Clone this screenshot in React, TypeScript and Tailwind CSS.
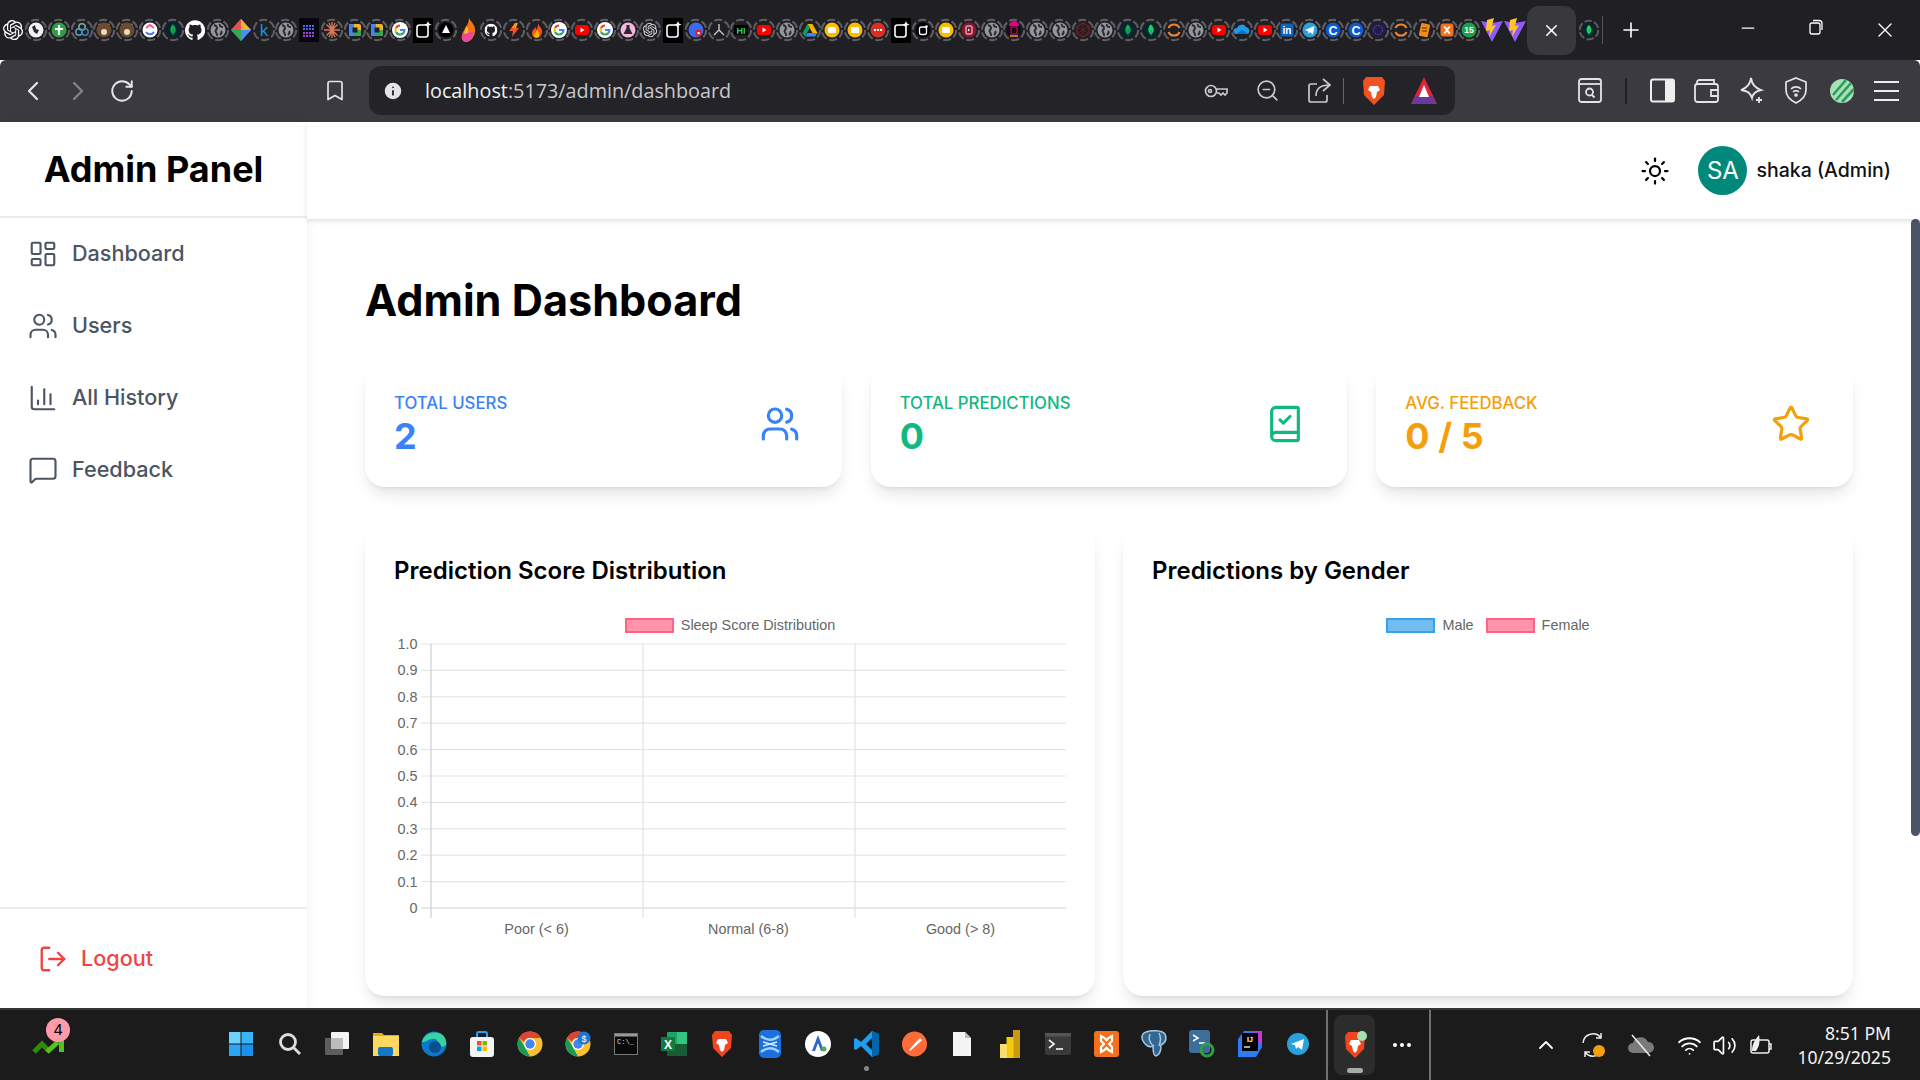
import React from 'react'
import {
  BarChart3,
  BookCheck,
  ChevronLeft,
  ChevronRight,
  ChevronUp,
  LayoutDashboard,
  LogOut,
  MessageSquare,
  Minus,
  Plus,
  RotateCw,
  Star,
  Sun,
  Users,
  Volume2,
  Wifi,
  X,
  ZoomOut,
  Bookmark,
  Info,
} from 'lucide-react'
import { SiGithub, SiMongodb, SiOpenai } from 'react-icons/si'

const UI = '"Inter", "Liberation Sans", sans-serif'

function G() {
  return (
    <>
      <circle cx="12" cy="12" r="8" fill="#fff" />
      <path d="M12 7.5a4.5 4.5 0 0 0-4 2.5" stroke="#ea4335" strokeWidth="2.2" fill="none" />
      <path d="M8 10a4.5 4.5 0 0 0 0 4" stroke="#fbbc05" strokeWidth="2.2" fill="none" />
      <path d="M8 14a4.5 4.5 0 0 0 7.4 1" stroke="#34a853" strokeWidth="2.2" fill="none" />
      <path d="M15.4 15a4.5 4.5 0 0 0 1-3H12" stroke="#4285f4" strokeWidth="2.2" fill="none" />
    </>
  )
}

function Ring() {
  return <circle cx="12" cy="12" r="10.2" fill="none" stroke="#5e5e63" strokeWidth="2" strokeDasharray="8 2.7" />
}

function Disc({ c }: { c: string }) {
  return <circle cx="12" cy="12" r="7.5" fill={c} />
}

const GLYPHS: Record<string, React.ReactNode> = {
  globe: (
    <>
      <Ring />
      <Disc c="#93969c" />
      <path d="M8 7c3 1 4 3 2 5s2 3 1 6M14 6c-1 2 1 3 3 3M15 13c1 1 0 3-1 4" stroke="#2b2b30" strokeWidth="2" fill="none" />
    </>
  ),
  dog: (
    <>
      <Ring />
      <Disc c="#f2f2f2" />
      <path d="M8 9l3-2 1 4 3 1-2 4-3-2z" fill="#2a2a2a" />
    </>
  ),
  cross: (
    <>
      <Ring />
      <Disc c="#2ea043" />
      <path d="M12 7v10M8 11h8" stroke="#fff" strokeWidth="2.2" />
    </>
  ),
  rings: (
    <>
      <Ring />
      <circle cx="12" cy="9" r="3.2" fill="none" stroke="#7fa9a8" strokeWidth="1.5" />
      <circle cx="9" cy="14" r="3.2" fill="none" stroke="#5aa0b8" strokeWidth="1.5" />
      <circle cx="15" cy="14" r="3.2" fill="none" stroke="#3f7fbb" strokeWidth="1.5" />
    </>
  ),
  deer: (
    <>
      <Ring />
      <path d="M7 6l3 4M17 6l-3 4" stroke="#e8dcc8" strokeWidth="1.4" />
      <Disc c="#6b4a2e" />
      <circle cx="12" cy="14" r="3" fill="#e8dcc8" />
    </>
  ),
  clickup: (
    <>
      <Ring />
      <Disc c="#fff" />
      <path d="M8 10l4-3 4 3" stroke="#ff5a8a" strokeWidth="2" fill="none" />
      <path d="M8 14c2 3 6 3 8 0" stroke="#4f7bff" strokeWidth="2" fill="none" />
    </>
  ),
  mongo: (
    <>
      <Ring />
      <Disc c="#04262e" />
      <g transform="translate(6 6) scale(.5)">
        <SiMongodb size={24} color="#13aa52" />
      </g>
    </>
  ),
  mongo2: (
    <>
      <Ring />
      <Disc c="#04262e" />
      <g transform="translate(6 6) scale(.5)">
        <SiMongodb size={24} color="#1fd066" />
      </g>
    </>
  ),
  gemini: (
    <>
      <path d="M12 1l10 11-10 11L2 12z" fill="#4c8df6" />
      <path d="M12 1l10 11H12z" fill="#f2b32e" />
      <path d="M12 12h10L12 23z" fill="#4c8df6" />
      <path d="M2 12L12 1v11z" fill="#e5534b" />
      <path d="M2 12h10v11z" fill="#34a853" />
    </>
  ),
  k: (
    <>
      <Ring />
      <text x="12" y="18" textAnchor="middle" fontSize="17" fill="#1597d5" fontFamily="Liberation Sans">k</text>
    </>
  ),
  codesq: (
    <>
      <rect x="2" y="0" width="20" height="24" fill="#08060f" />
      <path d="M6 8h12M6 11h12" stroke="#4d6ae0" strokeWidth="2" strokeDasharray="2 1" />
      <path d="M6 15h12M6 18h12" stroke="#a040e0" strokeWidth="2" strokeDasharray="2 1" />
    </>
  ),
  claude: (
    <>
      <Ring />
      <path d="M12 4v16M4 12h16M6.5 6.5l11 11M17.5 6.5l-11 11M9 4.8l6 14.4M15 4.8l-6 14.4" stroke="#d9775a" strokeWidth="1.3" />
    </>
  ),
  meet: (
    <>
      <Ring />
      <rect x="6" y="6" width="12" height="12" rx="2" fill="#f2b32e" />
      <rect x="6" y="12" width="12" height="6" rx="1" fill="#34a853" />
      <rect x="6" y="6" width="5" height="12" fill="#4285f4" />
      <rect x="9.5" y="9.5" width="5" height="5" fill="#202124" />
    </>
  ),
  g: (
    <>
      <Ring />
      <G />
    </>
  ),
  boxstar: (
    <>
      <rect x="2" y="0" width="20" height="25" fill="#000" />
      <rect x="6" y="7" width="11" height="12" rx="2.5" fill="none" stroke="#fff" strokeWidth="1.6" />
      <path d="M17 3l1 2.5 2.5 1-2.5 1-1 2.5-1-2.5-2.5-1 2.5-1z" fill="#fff" />
    </>
  ),
  boxround: (
    <>
      <Ring />
      <Disc c="#000" />
      <rect x="8.5" y="9" width="7" height="7.5" rx="2" fill="none" stroke="#fff" strokeWidth="1.3" />
      <circle cx="15.5" cy="8.5" r="1.3" fill="#fff" />
    </>
  ),
  tri: (
    <>
      <Ring />
      <Disc c="#000" />
      <path d="M12 7l4 8H8z" fill="#fff" />
    </>
  ),
  fire: (
    <>
      <path d="M13 0c2 4 7 7 6 14-1 6-5 10-9 10-3 0-5-3-4-7 1-5 7-10 7-17z" fill="#f97316" />
      <path d="M6 17c3-3 9-3 12-3-1 6-5 10-8 10-3 0-5-3-4-7z" fill="#ec4899" />
      <path d="M10 8c2 2 3 4 2 7l-4 1z" fill="#fbbf24" />
    </>
  ),
  github: (
    <g transform="translate(2 2) scale(.84)">
      <SiGithub size={24} color="#fff" />
    </g>
  ),
  githubr: (
    <>
      <Ring />
      <g transform="translate(5.5 5.5) scale(.54)">
        <SiGithub size={24} color="#fff" />
      </g>
    </>
  ),
  bolt: (
    <>
      <Ring />
      <path d="M13 5l-6 8h4l-1 6 7-9h-4l2-5z" fill="#f2542d" />
      <path d="M13 5l-3 5h4l2-5z" fill="#f59e0b" />
    </>
  ),
  flame: (
    <>
      <Ring />
      <path d="M13 4c0 4 5 6 4 11-1 3-3 5-5 5-3 0-5-2-5-5 0-3 3-4 3-6 1 1 1 2 1 3 2-2 2-5 2-8z" fill="#f4511e" />
      <path d="M12 12c1 2 3 3 2 6-1 2-4 2-5 0-1-2 2-3 3-6z" fill="#ffb300" />
    </>
  ),
  yt: (
    <>
      <Ring />
      <rect x="5" y="7" width="14" height="10" rx="3" fill="#f00" />
      <path d="M10.5 9.5l4 2.5-4 2.5z" fill="#fff" />
    </>
  ),
  flask: (
    <>
      <Ring />
      <Disc c="#f5b5e0" />
      <path d="M10.5 7h3v3l3 6h-9l3-6z" fill="#2a2a2a" />
    </>
  ),
  openai: (
    <g transform="translate(2 2) scale(.84)">
      <SiOpenai size={24} color="#fff" />
    </g>
  ),
  openair: (
    <>
      <Ring />
      <g transform="translate(4.8 4.8) scale(.6)">
        <SiOpenai size={24} color="#ddd" />
      </g>
    </>
  ),
  copilot: (
    <>
      <Ring />
      <Disc c="#3b6df0" />
      <circle cx="14.5" cy="15" r="3.5" fill="#e11d2a" />
      <rect x="13.5" y="14" width="2.2" height="2.2" fill="#fff" />
    </>
  ),
  nodes: (
    <>
      <Ring />
      <path d="M12 6v6l-5 5M12 12l5 5" stroke="#c9c9c9" strokeWidth="1.4" fill="none" />
    </>
  ),
  hn: (
    <>
      <Ring />
      <rect x="5" y="7" width="14" height="10" rx="2" fill="#000" />
      <text x="12" y="15.5" textAnchor="middle" fontSize="9" fontWeight="700" fill="#2bd46f" fontFamily="Liberation Sans">HI</text>
    </>
  ),
  drive: (
    <>
      <Ring />
      <path d="M9.5 6h5l5 9h-5z" fill="#f4b400" />
      <path d="M9.5 6L4.5 15l2.5 3.5 5-9z" fill="#0f9d58" />
      <path d="M7 18.5h10l2.5-3.5h-10z" fill="#4285f4" />
    </>
  ),
  keep: (
    <>
      <Ring />
      <Disc c="#fbbc04" />
      <rect x="8" y="9" width="8" height="6" rx="1" fill="#fff" />
    </>
  ),
  dots: (
    <>
      <Ring />
      <Disc c="#d93025" />
      <path d="M8 12h8" stroke="#fff" strokeWidth="2" strokeDasharray="2 1" />
    </>
  ),
  darkred: (
    <>
      <Ring />
      <Disc c="#8f1430" />
      <rect x="9" y="8" width="6" height="8" rx="1" fill="none" stroke="#eee" strokeWidth="1" />
      <path d="M11 10.5l2 1.5-2 1.5z" fill="#eee" />
    </>
  ),
  magenta: (
    <>
      <Ring />
      <Disc c="#111" />
      <path d="M7 8a5 5 0 0 1 10 0z" fill="#e6007e" />
      <rect x="9" y="9" width="6" height="7" fill="none" stroke="#e6007e" strokeWidth="1" />
      <path d="M8 18h8" stroke="#f59e0b" strokeWidth="1.5" />
    </>
  ),
  hex: (
    <>
      <Ring />
      <path d="M12 5l6 3.5v7L12 19l-6-3.5v-7z" fill="none" stroke="#7a1f1f" strokeWidth="1.3" />
      <path d="M12 5v14M6 8.5l12 7M18 8.5l-12 7" stroke="#7a1f1f" strokeWidth=".8" />
    </>
  ),
  arcs: (
    <>
      <Ring />
      <path d="M6.5 10a6 6 0 0 1 11 0" stroke="#f0852d" strokeWidth="2" fill="none" />
      <path d="M6.5 14a6 6 0 0 0 11 0" stroke="#f0852d" strokeWidth="2" fill="none" />
    </>
  ),
  cloud: (
    <>
      <Ring />
      <path d="M6 16a3 3 0 0 1 1-6 5 5 0 0 1 9-1 4 4 0 0 1 2 7z" fill="#1e9ae8" />
      <path d="M6 16l6-4 6 4z" fill="#0a6fc2" />
    </>
  ),
  linkedin: (
    <>
      <Ring />
      <rect x="5.5" y="5.5" width="13" height="13" rx="1.5" fill="#0a66c2" />
      <text x="12" y="16.3" textAnchor="middle" fontSize="10" fontWeight="700" fill="#fff" fontFamily="Liberation Sans">in</text>
    </>
  ),
  telegram: (
    <>
      <Ring />
      <Disc c="#2aa1dd" />
      <path d="M7 12l9.5-4-1.5 8.5-3-2.2-1.5 1.5-.5-2.5z" fill="#fff" />
    </>
  ),
  c: (
    <>
      <Ring />
      <Disc c="#0a5ad6" />
      <text x="12" y="16.5" textAnchor="middle" fontSize="12.5" fontWeight="700" fill="#fff" fontFamily="Liberation Sans">C</text>
    </>
  ),
  spiral: (
    <>
      <Ring />
      <Disc c="#211d4a" />
      <circle cx="12" cy="12" r="4.5" fill="none" stroke="#5a53a8" strokeWidth="1" strokeDasharray="2 1" />
    </>
  ),
  note: (
    <>
      <Ring />
      <rect x="8" y="5.5" width="9" height="13" rx="1" fill="#f08a18" transform="rotate(12 12 12)" />
      <path d="M10 10h5M10 13h5" stroke="#5a3208" strokeWidth="1" />
    </>
  ),
  xampp: (
    <>
      <Ring />
      <rect x="5.5" y="5.5" width="13" height="13" rx="2.5" fill="#f5701c" />
      <path d="M9 8.5c3 2 3 5 6 7M15 8.5c-3 2-3 5-6 7" stroke="#fff" strokeWidth="1.8" fill="none" />
    </>
  ),
  fifteen: (
    <>
      <Ring />
      <Disc c="#19a24a" />
      <text x="12" y="15.2" textAnchor="middle" fontSize="8.5" fontWeight="700" fill="#fff" fontFamily="Liberation Sans">15</text>
    </>
  ),
  vite: (
    <>
      <path d="M1 3l11 2 11-2-11 21z" fill="#8f5cf7" />
      <path d="M14 0L7 2l-1 11 4-1-1 7 7-12-4 1z" fill="#ffc728" />
    </>
  ),
}

const TABS = [
  'openai', 'dog', 'cross', 'rings', 'deer', 'deer', 'clickup', 'mongo', 'github', 'globe', 'gemini', 'k', 'globe', 'codesq',
  'claude', 'meet', 'meet', 'g', 'boxstar', 'tri', 'fire', 'githubr', 'bolt', 'flame', 'g', 'yt', 'g', 'flask', 'openair',
  'boxstar', 'copilot', 'nodes', 'hn', 'yt', 'globe', 'drive', 'keep', 'keep', 'dots', 'boxstar', 'boxround', 'keep', 'darkred',
  'globe', 'magenta', 'globe', 'globe', 'hex', 'globe', 'mongo', 'mongo2', 'arcs', 'globe', 'yt', 'cloud', 'yt', 'linkedin',
  'telegram', 'c', 'c', 'spiral', 'arcs', 'note', 'xampp', 'fifteen', 'vite', 'vite',
]

function Favicon({ kind }: { kind: string }) {
  return (
    <div className="flex h-6 w-[22.75px] shrink-0 items-center justify-center">
      <svg width="24" height="24" viewBox="0 0 24 24" className="shrink-0 overflow-visible">
        {GLYPHS[kind]}
      </svg>
    </div>
  )
}

function TabStrip() {
  return (
    <div className="flex h-[60px] items-center bg-[#1f1f24] pl-[2px] text-white">
      {TABS.map((t, i) => (
        <Favicon key={i} kind={t} />
      ))}
      <div className="ml-[1px] flex h-[49px] w-[49px] items-center justify-center rounded-xl bg-[#38383d]">
        <X size={19} strokeWidth={2} />
      </div>
      <div className="flex w-[26px] justify-center">
        <svg width="22" height="24" viewBox="0 0 24 24">
          {GLYPHS.mongo2}
        </svg>
      </div>
      <div className="h-[28px] w-px bg-[#55555a]" />
      <div className="flex w-[55px] justify-center">
        <Plus size={24} strokeWidth={1.6} />
      </div>
      <div className="ml-auto flex">
        <div className="flex w-[68px] justify-center">
          <Minus size={20} strokeWidth={1.5} />
        </div>
        <div className="flex w-[68px] justify-center">
          <svg width="18" height="18" viewBox="0 0 18 18" fill="none" stroke="#fff" strokeWidth="1.3">
            <rect x="3" y="5" width="10" height="11" rx="2" />
            <path d="M6 2.5h6a3 3 0 0 1 3 3V12" />
          </svg>
        </div>
        <div className="flex w-[70px] justify-center">
          <X size={24} strokeWidth={1.4} />
        </div>
      </div>
    </div>
  )
}

function Toolbar() {
  return (
    <div className="flex h-[62px] items-center rounded-t-md bg-[#3a3a40] pb-[1px] text-[#e4e4e8]">
      <div className="ml-[17px] flex w-[128px] items-center">
        <div className="flex w-[32px] justify-center">
          <ChevronLeft size={34} strokeWidth={1.7} />
        </div>
        <div className="ml-[13px] flex w-[32px] justify-center text-[#85858a]">
          <ChevronRight size={34} strokeWidth={1.7} />
        </div>
        <div className="ml-[12px] flex w-[32px] justify-center">
          <RotateCw size={26} strokeWidth={1.8} />
        </div>
      </div>
      <div className="ml-[178px] flex w-[24px] justify-center">
        <Bookmark size={27} strokeWidth={1.7} />
      </div>
      <div className="ml-[22px] flex h-[49px] w-[1086px] items-center rounded-xl bg-[#232328] pl-[13px]">
        <Info size={22} fill="#e4e4e8" stroke="#232328" strokeWidth={2} />
        <div className="ml-[21px] text-[19.8px] leading-none text-[#c6c8ce]" style={{ fontFamily: '"Open Sans", sans-serif' }}>
          <span className="text-[#eef0f2]">localhost</span>:5173/admin/dashboard
        </div>
        <div className="ml-auto flex items-center text-[#c9c9cd]">
          <svg width="24" height="16" viewBox="0 0 24 16" fill="none" stroke="#c9c9cd" strokeWidth="1.7">
            <circle cx="7" cy="8" r="5.5" />
            <circle cx="6" cy="8" r="1.5" />
            <path d="M12.5 6H23v4l-2 2-2-2-2 2-2-2h-2.5" />
          </svg>
          <div className="ml-[27px]">
            <ZoomOut size={25} strokeWidth={1.6} />
          </div>
          <svg className="ml-[27px]" width="25" height="25" viewBox="0 0 25 25" fill="none" stroke="#c9c9cd" strokeWidth="1.7">
            <path d="M10 6H4a2 2 0 0 0-2 2v14a2 2 0 0 0 2 2h14a2 2 0 0 0 2-2v-5" />
            <path d="M9 18c0-7 4-11 13-11M16 1l7 6-7 6" />
          </svg>
          <div className="ml-[11px] h-[26px] w-px bg-[#66666b]" />
          <svg className="ml-[17px]" width="26" height="30" viewBox="0 0 26 30">
            <path d="M5 1h16l3 4-1 14-10 10L3 19 2 5z" fill="#f0531f" />
            <path d="M9 10h8l2 4-3 2-1 5-2 2-2-2-1-5-3-2z" fill="#fff" />
          </svg>
          <svg className="ml-[23px] mr-[17px]" width="28" height="30" viewBox="0 0 28 30">
            <path d="M14 1l13 27H1z" fill="#e0243a" />
            <path d="M1 28l5-8h16l5 8z" fill="#6d3a9c" />
            <path d="M14 9l5 12H9z" fill="#fff" />
          </svg>
        </div>
      </div>
      <div className="ml-[123px] flex items-center">
        <svg width="24" height="25" viewBox="0 0 24 25" fill="none" stroke="#e4e4e8" strokeWidth="1.8">
          <rect x="1" y="1" width="22" height="23" rx="2.5" />
          <path d="M1 6h22" />
          <circle cx="11.5" cy="14" r="3.5" />
          <path d="M14 17l2.5 2.5" />
        </svg>
        <div className="ml-[23px] h-[26px] w-[2px] bg-[#202024]" />
        <svg className="ml-[23px]" width="25" height="25" viewBox="0 0 25 25">
          <rect x="1" y="1.5" width="23" height="22" rx="2" fill="none" stroke="#eee" strokeWidth="2" />
          <rect x="15" y="1.5" width="9" height="22" fill="#eee" />
        </svg>
        <svg className="ml-[19px]" width="26" height="24" viewBox="0 0 26 24" fill="none" stroke="#e4e4e8" strokeWidth="1.8">
          <rect x="1" y="5" width="23" height="18" rx="2.5" />
          <path d="M3 5V3.5A2.5 2.5 0 0 1 5.5 1H20v4M24 11h-7v6h7" />
        </svg>
        <svg className="ml-[18px]" width="26" height="28" viewBox="0 0 26 28" fill="none" stroke="#e4e4e8" strokeWidth="1.8">
          <path d="M13 1c1 7 4 10 10 12-5 1-8 3-9 8-2-6-5-7-11-8 6-2 9-5 10-12z" />
          <path d="M21 20v6M18 23h6" />
        </svg>
        <svg className="ml-[21px]" width="22" height="27" viewBox="0 0 22 27" fill="none" stroke="#e4e4e8" strokeWidth="1.7">
          <path d="M11 1l10 4v8c0 6-4 10-10 13C5 23 1 19 1 13V5z" />
          <path d="M6 12a7 7 0 0 1 10 0M8 15a4 4 0 0 1 6 0" />
          <circle cx="11" cy="18" r="1" fill="#e4e4e8" />
        </svg>
        <svg className="ml-[23px]" width="24" height="24" viewBox="0 0 24 24">
          <circle cx="12" cy="12" r="12" fill="#a5e2b0" />
          <path d="M3 16L16 1M6 21L21 4M12 23L24 10" stroke="#2b9a66" strokeWidth="2.6" />
        </svg>
        <div className="ml-[20px] flex w-[25px] flex-col gap-[7px]">
          <div className="h-[2px] bg-[#eee]" />
          <div className="h-[2px] bg-[#eee]" />
          <div className="h-[2px] bg-[#eee]" />
        </div>
      </div>
    </div>
  )
}

const NAV = [
  { label: 'Dashboard', Icon: LayoutDashboard },
  { label: 'Users', Icon: Users },
  { label: 'All History', Icon: BarChart3 },
  { label: 'Feedback', Icon: MessageSquare },
]

function Sidebar() {
  return (
    <aside className="flex w-[307px] shrink-0 flex-col bg-white shadow-[2px_0_8px_rgba(0,0,0,0.05)]">
      <div className="flex h-[96px] items-center justify-center border-b-2 border-[#ececee] text-[36px] font-bold text-black">
        Admin Panel
      </div>
      <nav className="flex flex-col">
        {NAV.map(({ label, Icon }) => (
          <div key={label} className="flex h-[72px] items-center pl-[28px] text-[21.6px] font-medium text-[#4b5563]">
            <Icon size={30} strokeWidth={1.7} />
            <span className="-mt-[1px] ml-[14px]">{label}</span>
          </div>
        ))}
      </nav>
      <div className="mt-auto flex h-[101px] items-center border-t-2 border-[#ececee] pl-[38px] text-[21.6px] font-medium text-[#ef4444]">
        <LogOut size={30} strokeWidth={1.9} />
        <span className="ml-[13px]">Logout</span>
      </div>
    </aside>
  )
}

const STATS = [
  { label: 'TOTAL USERS', value: '2', color: 'text-[#3b82f6]', Icon: Users },
  { label: 'TOTAL PREDICTIONS', value: '0', color: 'text-[#10b981]', Icon: BookCheck },
  { label: 'AVG. FEEDBACK', value: '0 / 5', color: 'text-[#f59e0b]', Icon: Star },
]

function StatCard({ label, value, color, Icon }: (typeof STATS)[number]) {
  return (
    <div className={`flex h-[123px] items-center justify-between rounded-[20px] bg-white pl-[29px] pr-[42px] shadow-lg ${color}`}>
      <div className="-mt-[5px]">
        <div className="text-[16.8px] font-medium leading-[26px]">{label}</div>
        <div className="text-[36px] font-bold leading-[40px]">{value}</div>
      </div>
      <Icon size={40} strokeWidth={1.9} className="-mt-[3px]" />
    </div>
  )
}

function LegendChip({ label, fill, stroke }: { label: string; fill: string; stroke: string }) {
  return (
    <div className="flex items-center">
      <div className="h-[15px] w-[49px] border-2" style={{ backgroundColor: fill, borderColor: stroke }} />
      <span className="ml-[7px]">{label}</span>
    </div>
  )
}

const PINK = { fill: '#ff94ac', stroke: '#ff6384' }
const BLUE = { fill: '#72bcf0', stroke: '#36a2eb' }

function Legend({ children }: { children: React.ReactNode }) {
  return (
    <div
      className="flex h-[30px] items-center justify-center gap-[12px] text-[14.4px] text-[#666]"
      style={{ fontFamily: '"Liberation Sans", sans-serif' }}
    >
      {children}
    </div>
  )
}

const TICKS = ['1.0', '0.9', '0.8', '0.7', '0.6', '0.5', '0.4', '0.3', '0.2', '0.1', '0']
const CATS = [
  { label: 'Poor (< 6)', x: 142.5 },
  { label: 'Normal (6-8)', x: 354.5 },
  { label: 'Good (> 8)', x: 566.5 },
]

// plot area is 37..672 wide, 3..267 tall
function BarChart() {
  const step = 26.4
  const cols = [37, 249, 461]
  return (
    <svg width="672" height="310" viewBox="0 0 672 310" className="block overflow-visible" fontFamily="Liberation Sans" fontSize="14.4" fill="#666">
      {TICKS.map((t, i) => {
        const y = 3 + i * step
        return (
          <g key={t}>
            <line x1="27" x2="672" y1={y} y2={y} stroke={t === '0' ? '#cfcfcf' : '#e6e6e6'} strokeWidth="1.2" />
            <text x="23.5" y={y + 5} textAnchor="end">
              {t}
            </text>
          </g>
        )
      })}
      {cols.map((x) => (
        <line key={x} x1={x} x2={x} y1="3" y2="277" stroke={x === 37 ? '#cfcfcf' : '#e2e2e2'} strokeWidth="1.2" />
      ))}
      {CATS.map((c) => (
        <text key={c.label} x={c.x} y="292.5" textAnchor="middle">
          {c.label}
        </text>
      ))}
    </svg>
  )
}

function ChartCard({ title, children }: { title: string; children: React.ReactNode }) {
  return (
    <div className="h-[471px] rounded-[20px] bg-white px-[29px] pt-[28px] shadow-lg">
      <h3 className="text-[24px] font-semibold leading-[36px] text-black">{title}</h3>
      <div className="mt-[22px]">{children}</div>
    </div>
  )
}

function Main() {
  return (
    <main className="min-w-0 flex-1 overflow-hidden pl-[58px] pr-[58px] pt-[53px]">
      <h1 className="text-[43.2px] font-bold leading-[56px] text-black">Admin Dashboard</h1>
      <div className="mt-[36px] grid grid-cols-3 gap-[29px]">
        {STATS.map((s) => (
          <StatCard key={s.label} {...s} />
        ))}
      </div>
      <div className="mt-[38px] grid grid-cols-2 gap-[28px]">
        <ChartCard title="Prediction Score Distribution">
          <Legend>
            <LegendChip label="Sleep Score Distribution" {...PINK} />
          </Legend>
          <BarChart />
        </ChartCard>
        <ChartCard title="Predictions by Gender">
          <Legend>
            <LegendChip label="Male" {...BLUE} />
            <LegendChip label="Female" {...PINK} />
          </Legend>
        </ChartCard>
      </div>
    </main>
  )
}

function Header() {
  return (
    <header className="relative z-10 flex h-[97px] shrink-0 items-center justify-end bg-white pr-[29px] shadow-[0_2px_5px_rgba(0,0,0,0.12)]">
      <Sun size={30} strokeWidth={1.8} className="text-black" />
      <div className="ml-[28px] flex h-[49px] w-[49px] items-center justify-center rounded-full bg-[#00897b] text-[24px] text-white">SA</div>
      <span className="ml-[9px] text-[19.5px] font-medium text-[#111]">shaka (Admin)</span>
    </header>
  )
}

const TASK_ICONS: React.ReactNode[] = [
  <svg key="win" width="26" height="26" viewBox="0 0 26 26">
    <rect x="0" y="1" width="11.5" height="11.5" fill="#6fd0fa" />
    <rect x="12.5" y="1" width="11.5" height="11.5" fill="#39b5f7" />
    <rect x="0" y="13.5" width="11.5" height="11.5" fill="#2ba5f4" />
    <rect x="12.5" y="13.5" width="11.5" height="11.5" fill="#1a90f0" />
  </svg>,
  <svg key="search" width="24" height="24" viewBox="0 0 24 24" fill="none">
    <circle cx="10" cy="10" r="7.5" stroke="#ddd" strokeWidth="2.8" />
    <path d="M15.5 15.5L22 22" stroke="#ddd" strokeWidth="2.8" />
  </svg>,
  <svg key="views" width="26" height="24" viewBox="0 0 26 24">
    <rect x="0" y="6" width="18" height="17" rx="1" fill="#5d5d5d" />
    <rect x="6" y="0" width="18" height="17" rx="1" fill="#f3f3f3" />
    <rect x="6" y="6" width="12" height="11" fill="#bdbdbd" />
  </svg>,
  <svg key="files" width="26" height="24" viewBox="0 0 26 24">
    <path d="M0 1h9l2 2h15v20H0z" fill="#e9a81c" />
    <rect x="0" y="4" width="26" height="20" fill="#ffd95f" />
    <rect x="5" y="15" width="15" height="9" rx="2" fill="#1478c8" />
  </svg>,
  <svg key="edge" width="26" height="26" viewBox="0 0 26 26">
    <circle cx="13" cy="13" r="12.5" fill="#0c79c9" />
    <path d="M1 11C3 3 12-1 20 3c4 2 6 7 5 11-2 3-8 2-9-1 2-3-1-6-5-5-5 1-8 4-10 3z" fill="#39d3a1" />
    <circle cx="14" cy="16" r="6" fill="#0a4f92" />
  </svg>,
  <svg key="store" width="24" height="26" viewBox="0 0 24 26">
    <path d="M7 6V3a2 2 0 0 1 2-2h6a2 2 0 0 1 2 2v3" fill="none" stroke="#2aa0f0" strokeWidth="2" />
    <rect x="0" y="6" width="24" height="20" rx="3" fill="#f4f4f4" />
    <rect x="7" y="10" width="4.5" height="4.5" fill="#f25022" />
    <rect x="12.5" y="10" width="4.5" height="4.5" fill="#7fba00" />
    <rect x="7" y="15.5" width="4.5" height="4.5" fill="#00a4ef" />
    <rect x="12.5" y="15.5" width="4.5" height="4.5" fill="#ffb900" />
  </svg>,
  <svg key="chrome" width="26" height="26" viewBox="0 0 26 26">
    <circle cx="13" cy="13" r="12.5" fill="#fbc02d" />
    <path d="M2.2 7A12.5 12.5 0 0 1 24 7H13a6 6 0 0 0-6 4z" fill="#db4437" />
    <path d="M2.2 7l5.8 9.5 5 9A12.5 12.5 0 0 1 2.2 7z" fill="#0f9d58" />
    <circle cx="13" cy="13" r="6" fill="#fff" />
    <circle cx="13" cy="13" r="4.7" fill="#4285f4" />
  </svg>,
  <svg key="chrome2" width="26" height="26" viewBox="0 0 26 26">
    <circle cx="13" cy="13" r="12.5" fill="#fbc02d" />
    <path d="M2.2 7A12.5 12.5 0 0 1 24 7H13a6 6 0 0 0-6 4z" fill="#db4437" />
    <path d="M2.2 7l5.8 9.5 5 9A12.5 12.5 0 0 1 2.2 7z" fill="#0f9d58" />
    <circle cx="13" cy="13" r="6" fill="#fff" />
    <circle cx="13" cy="13" r="4.7" fill="#4285f4" />
    <circle cx="19" cy="7" r="6.5" fill="#1976d2" />
    <text x="19" y="10.5" textAnchor="middle" fontSize="9" fill="#fff" fontFamily="Liberation Sans">$</text>
  </svg>,
  <svg key="cmd" width="24" height="22" viewBox="0 0 24 22">
    <rect x="0.5" y="0.5" width="23" height="21" fill="#0a0a0a" stroke="#777" />
    <rect x="1" y="1" width="22" height="2.5" fill="#999" />
    <text x="3" y="11" fontSize="7" fill="#ddd" fontFamily="Liberation Mono">C:\_</text>
  </svg>,
  <svg key="excel" width="26" height="24" viewBox="0 0 26 24">
    <rect x="6" y="0" width="20" height="24" rx="1" fill="#21a366" />
    <rect x="16" y="0" width="10" height="12" fill="#33c481" />
    <rect x="6" y="12" width="20" height="12" fill="#185c37" />
    <rect x="0" y="5" width="14" height="14" rx="1" fill="#107c41" />
    <text x="7" y="16.5" textAnchor="middle" fontSize="12" fontWeight="700" fill="#fff" fontFamily="Liberation Sans">X</text>
  </svg>,
  <svg key="brave" width="24" height="28" viewBox="0 0 24 28">
    <path d="M5 1h14l3 4-1 13-9 9-9-9L2 5z" fill="#f0461f" />
    <path d="M8 9h8l2 4-3 2-1 5-2 2-2-2-1-5-3-2z" fill="#fff" />
  </svg>,
  <svg key="ax" width="22" height="28" viewBox="0 0 22 28">
    <rect x="0" y="0" width="22" height="28" rx="5" fill="#1b6fe0" />
    <path d="M2 6c6 5 12 5 18 0M2 22c6-5 12-5 18 0" stroke="#9fd4ff" strokeWidth="2.5" fill="none" />
    <path d="M4 12l14 4M18 12L4 16" stroke="#d7eeff" strokeWidth="1.5" />
  </svg>,
  <svg key="compass" width="26" height="26" viewBox="0 0 26 26">
    <circle cx="13" cy="13" r="13" fill="#fff" />
    <path d="M13 4l6 16h-3l-3-8-3 8H7z" fill="#3166c9" />
    <circle cx="19" cy="18" r="2.5" fill="#4caf50" />
  </svg>,
  <svg key="vscode" width="25" height="26" viewBox="0 0 25 26">
    <path d="M18 0l7 3v20l-7 3L7 15l-5 4-2-1V8l2-1 5 4z" fill="#1f9cf0" />
    <path d="M18 7l-6 6 6 6z" fill="#1a1a1a" />
    <path d="M18 0l7 3v20l-7 3z" fill="#0065a9" />
  </svg>,
  <svg key="postman" width="25" height="26" viewBox="0 0 25 26">
    <circle cx="12.5" cy="13" r="12.5" fill="#ff6c37" />
    <path d="M7 19l8-9 2 2-9 8zM15 10l3-3 2 2-3 3z" fill="#fff" />
  </svg>,
  <svg key="doc" width="18" height="24" viewBox="0 0 18 24">
    <path d="M0 0h12l6 6v18H0z" fill="#f4f4f4" />
    <path d="M12 0l6 6h-6z" fill="#bbb" />
  </svg>,
  <svg key="bi" width="20" height="28" viewBox="0 0 20 28">
    <rect x="13" y="0" width="7" height="28" fill="#c99a12" />
    <rect x="6.5" y="7" width="7" height="21" fill="#f2c811" />
    <rect x="0" y="14" width="7" height="14" fill="#f9df6a" />
  </svg>,
  <svg key="term" width="26" height="22" viewBox="0 0 26 22">
    <rect x="0" y="0" width="26" height="22" rx="2" fill="#3a3a3a" />
    <rect x="0" y="0" width="26" height="3.5" fill="#555" />
    <path d="M4 7l5 4-5 4" stroke="#eee" strokeWidth="1.7" fill="none" />
    <path d="M11 16h7" stroke="#eee" strokeWidth="1.7" />
  </svg>,
  <svg key="xampp" width="25" height="26" viewBox="0 0 25 26">
    <rect x="0" y="0" width="25" height="26" rx="3" fill="#f5701c" />
    <path d="M7 5c2 1 4 2 5.5 4 1.5-2 3.5-3 5.5-4v5l-3 3 3 3v5c-2-1-4-2-5.500-4-1.500 2-3.500 3-5.500 4v-5l3-3-3-3z" fill="none" stroke="#fff" strokeWidth="2.2" />
  </svg>,
  <svg key="pg" width="26" height="28" viewBox="0 0 26 28" fill="none" stroke="#a9c8e0" strokeWidth="1.5">
    <path d="M5 2c5-2 16-2 19 2 2 5 0 9-4 11 0 5-1 10-5 11-3 0-3-6-3-10-4 2-8-1-10-5C0 7 1 3 5 2z" fill="#336791" />
    <path d="M9 4c-2 5 0 10 4 12M18 3c2 4 2 8 0 13" />
  </svg>,
  <svg key="ps" width="26" height="28" viewBox="0 0 26 28">
    <rect x="0" y="0" width="21" height="23" rx="3" fill="#3c6e9c" />
    <path d="M4 5l5 3-5 3M10 13h6" stroke="#fff" strokeWidth="1.5" fill="none" />
    <circle cx="18" cy="20" r="6" fill="none" stroke="#2f9e44" strokeWidth="3" />
  </svg>,
  <svg key="idea" width="24" height="26" viewBox="0 0 24 26">
    <path d="M6 0h18v16l-6 10H0V8z" fill="#2d7bf6" />
    <path d="M14 0h10v16z" fill="#c13bd0" />
    <rect x="4" y="2" width="16" height="18" fill="#000" />
    <text x="12" y="11" textAnchor="middle" fontSize="7" fontWeight="700" fill="#fff" fontFamily="Liberation Sans">IJ</text>
    <path d="M6 16h6" stroke="#fff" strokeWidth="1.3" />
  </svg>,
  <svg key="tg" width="22" height="22" viewBox="0 0 22 22">
    <circle cx="11" cy="11" r="11" fill="#2aa1dd" />
    <path d="M4 11l13-5-2 11-4-3-2 2-1-4z" fill="#fff" />
  </svg>,
]

function Taskbar() {
  return (
    <div className="flex h-[72px] shrink-0 items-center border-t-2 border-[#343434] bg-[#1b1b1b] text-white">
      <div className="relative ml-[32px] w-[33px]">
        <svg width="34" height="24" viewBox="0 0 34 24" className="block">
          <path d="M2 19l8-8 7 7" fill="none" stroke="#2f8a0e" strokeWidth="5" />
          <path d="M15 19l11-10" stroke="#55c21a" strokeWidth="5" />
          <path d="M21 6h11v13h-5V6z" fill="#55c21a" />
        </svg>
        <div className="absolute left-[14px] -top-[15px] flex h-6 w-6 items-center justify-center rounded-full bg-[#ff9aa8] text-[15px] text-black">4</div>
      </div>
      <div className="ml-[153px] flex -translate-y-[1px]">
        {TASK_ICONS.map((icon, i) => (
          <div key={i} className="relative flex h-[70px] w-12 items-center justify-center">
            {icon}
            {i === 13 && <div className="absolute bottom-[8px] h-[5px] w-[5px] rounded-full bg-[#888]" />}
          </div>
        ))}
      </div>
      <div className="ml-[4px] h-[70px] w-[2px] bg-[#6f6f6f]" />
      <div className="relative ml-[6px] flex h-[60px] w-[41px] items-center justify-center rounded-lg bg-[#2c2c2c]">
        <svg width="24" height="28" viewBox="0 0 24 28">
          <path d="M5 1h14l3 4-1 13-9 9-9-9L2 5z" fill="#f0461f" />
          <path d="M8 9h8l2 4-3 2-1 5-2 2-2-2-1-5-3-2z" fill="#fff" />
          <circle cx="19" cy="5" r="5" fill="#a5e2b0" />
        </svg>
        <div className="absolute bottom-[2px] h-[5px] w-4 rounded-full bg-[#aaa]" />
      </div>
      <div className="ml-[16px] flex w-[22px] justify-center gap-[3px]">
        <div className="h-[4px] w-[4px] rounded-full bg-white" />
        <div className="h-[4px] w-[4px] rounded-full bg-white" />
        <div className="h-[4px] w-[4px] rounded-full bg-white" />
      </div>
      <div className="ml-[16px] h-[70px] w-[2px] bg-[#6f6f6f]" />
      <div className="ml-[103px] flex items-center">
        <ChevronUp size={24} strokeWidth={1.8} />
        <svg className="ml-[22px]" width="26" height="26" viewBox="0 0 26 26" fill="none" stroke="#eee" strokeWidth="1.5">
          <path d="M3 11A10 10 0 0 1 21 6M21 1v5h-5M23 15A10 10 0 0 1 5 20M5 25v-5h5" />
          <circle cx="19" cy="19" r="6" fill="#f59e0b" stroke="none" />
        </svg>
        <svg className="ml-[22px]" width="26" height="24" viewBox="0 0 26 24">
          <path d="M5 20a5 5 0 0 1 0-10 8 8 0 0 1 15-1 5.5 5.5 0 0 1 1 11z" fill="#7a7a7a" />
          <path d="M4 2l18 21" stroke="#eee" strokeWidth="1.5" />
        </svg>
        <div className="ml-[23px]">
          <Wifi size={25} strokeWidth={1.8} />
        </div>
        <div className="ml-[10px]">
          <Volume2 size={25} strokeWidth={1.6} />
        </div>
        <svg className="ml-[10px]" width="26" height="26" viewBox="0 0 26 26" fill="none" stroke="#eee" strokeWidth="1.5">
          <rect x="4" y="8" width="18" height="13" rx="2" />
          <path d="M22 12h2v5h-2" />
          <path d="M5 19c0-8 4-12 7-16 1 5 1 11-3 16z" fill="#eee" stroke="none" />
        </svg>
      </div>
      <div className="ml-auto pr-[29px] text-right text-[17.6px] leading-[24px] text-[#f2f2f2]" style={{ fontFamily: '"Noto Sans", sans-serif' }}>
        <div>8:51 PM</div>
        <div>10/29/2025</div>
      </div>
    </div>
  )
}

export default function App() {
  return (
    <div className="flex h-[1080px] w-[1920px] flex-col overflow-hidden bg-white" style={{ fontFamily: UI }}>
      <TabStrip />
      <Toolbar />
      <div className="flex min-h-0 flex-1">
        <Sidebar />
        <div className="flex min-w-0 flex-1 flex-col">
          <Header />
          <div className="flex min-h-0 flex-1">
            <Main />
            <div className="h-full w-[9px] shrink-0">
              <div className="h-[617px] rounded-full bg-[#4b5563]" />
            </div>
          </div>
        </div>
      </div>
      <Taskbar />
    </div>
  )
}
